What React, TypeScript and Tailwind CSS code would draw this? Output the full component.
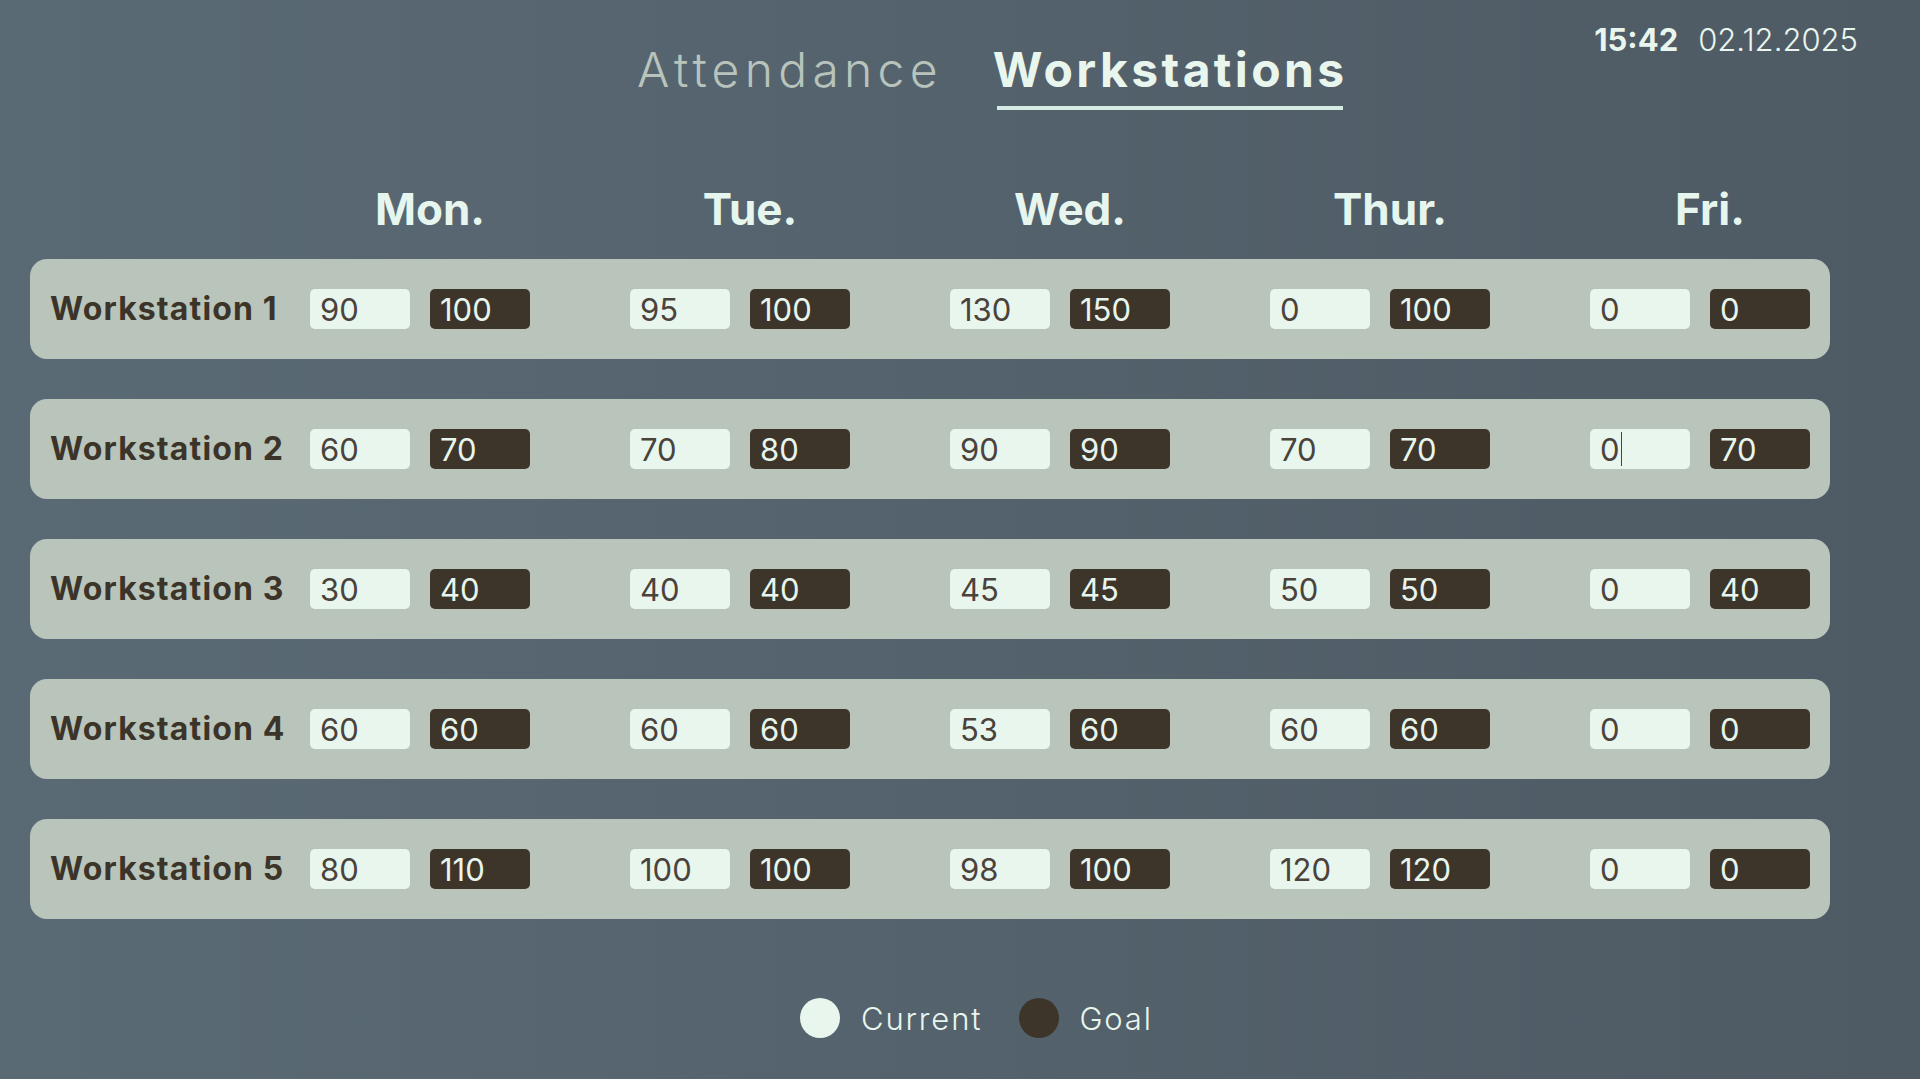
const days = ["Mon.", "Tue.", "Wed.", "Thur.", "Fri."];

const rows: { name: string; values: [string, string][] }[] = [
  { name: "Workstation 1", values: [["90", "100"], ["95", "100"], ["130", "150"], ["0", "100"], ["0", "0"]] },
  { name: "Workstation 2", values: [["60", "70"], ["70", "80"], ["90", "90"], ["70", "70"], ["0", "70"]] },
  { name: "Workstation 3", values: [["30", "40"], ["40", "40"], ["45", "45"], ["50", "50"], ["0", "40"]] },
  { name: "Workstation 4", values: [["60", "60"], ["60", "60"], ["53", "60"], ["60", "60"], ["0", "0"]] },
  { name: "Workstation 5", values: [["80", "110"], ["100", "100"], ["98", "100"], ["120", "120"], ["0", "0"]] },
];

const font = { fontFamily: "Inter, 'Noto Sans', sans-serif" };

function Cell({ value, goal, caret }: { value: string; goal?: boolean; caret?: boolean }) {
  return (
    <div
      className={
        goal
          ? "w-[100px] h-[40px] rounded-[5px] bg-[#3d352a] text-[#e8f5ee] pl-[10px] flex items-center text-[31px] leading-none"
          : "w-[100px] h-[40px] rounded-[5px] bg-[#e8f6ee] text-[#4a433c] pl-[10px] flex items-center text-[31px] leading-none"
      }
    >
      <span>{value}</span>
      {caret && <span className="w-px h-[34px] bg-[#4a433c] ml-px" />}
    </div>
  );
}

export default function App() {
  return (
    <div className="bg-[#9aa9b3]" style={font}>
      <div className="h-[1079px] bg-gradient-to-r from-[#5a6a75] to-[#4e5a64] flex flex-col">

        {/* Header */}
        <div className="flex items-start">
          <div className="flex items-start pl-[637px] pt-[46px]">
            <span className="text-[48px] leading-none font-light text-[#b8c3bc] tracking-[0.11em]">Attendance</span>
            <div className="ml-[50px] flex flex-col">
              <span className="text-[48px] leading-none font-bold text-[#e8f6ee] tracking-[0.07em]">Workstations</span>
              <div className="mt-[12px] mx-[4px] h-[4px] bg-[#d6ebe3]" />
            </div>
          </div>
          <div className="ml-auto mr-[62px] pt-[24px] flex items-baseline gap-[20px] text-[31px] leading-none text-[#e8f6ee]">
            <span className="font-bold">15:42</span>
            <span className="font-light">02.12.2025</span>
          </div>
        </div>

        {/* Day headers */}
        <div className="mt-[77px] ml-[30px] w-[1800px] px-5 flex">
          <div className="w-[260px]" />
          <div className="flex gap-[100px]">
            {days.map((d) => (
              <div key={d} className="w-[220px] pl-5 text-center text-[44px] leading-none font-bold text-[#e6f6ee]">
                {d}
              </div>
            ))}
          </div>
        </div>

        {/* Rows */}
        <div className="mt-[28px] ml-[30px] w-[1800px] flex flex-col gap-[40px]">
          {rows.map((r, ri) => (
            <div key={r.name} className="h-[100px] rounded-[17px] bg-[#b9c4bb] px-5 flex items-center">
              <div className="w-[260px] text-[32px] leading-none font-bold text-[#3c3429] tracking-[0.035em]">
                {r.name}
              </div>
              <div className="flex gap-[100px]">
                {r.values.map(([cur, goal], di) => (
                  <div key={di} className="flex gap-5">
                    <Cell value={cur} caret={ri === 1 && di === 4} />
                    <Cell value={goal} goal />
                  </div>
                ))}
              </div>
            </div>
          ))}
        </div>

        {/* Legend */}
        <div className="mt-[79px] pl-[800px] flex items-center text-[31px] leading-none font-light text-[#e8f6ee] tracking-[0.06em]">
          <div className="w-[40px] h-[40px] rounded-full bg-[#e8f6ee]" />
          <span className="ml-[21px]">Current</span>
          <div className="ml-[37px] w-[40px] h-[40px] rounded-full bg-[#3d352a]" />
          <span className="ml-[20px]">Goal</span>
        </div>
      </div>
    </div>
  );
}
